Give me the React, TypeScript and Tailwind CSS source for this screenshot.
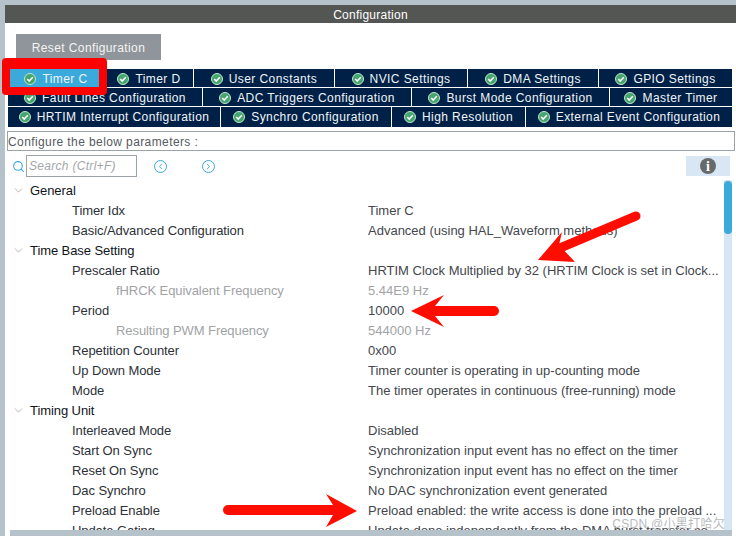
import {ChevronDown, ChevronLeft, ChevronRight, Search} from "lucide-react";

type Tab = {label: string; width: string; active?: boolean};

const tabRows: {height: string; pad: string; tabs: Tab[]}[] = [
    {
        height: "h-[18px]",
        pad: "pt-px",
        tabs: [
            {label: "Timer C", width: "w-[96px]", active: true},
            {label: "Timer D", width: "w-[88px]"},
            {label: "User Constants", width: "w-[140px]"},
            {label: "NVIC Settings", width: "w-[132px]"},
            {label: "DMA Settings", width: "w-[130px]"},
            {label: "GPIO Settings", width: "w-[133px]"},
        ],
    },
    {
        height: "h-[18px]",
        pad: "pt-px",
        tabs: [
            {label: "Fault Lines Configuration", width: "w-[194px]"},
            {label: "ADC Triggers Configuration", width: "w-[208px]"},
            {label: "Burst Mode Configuration", width: "w-[197px]"},
            {label: "Master Timer", width: "w-[122px]"},
        ],
    },
    {
        height: "h-[20px]",
        pad: "pt-0",
        tabs: [
            {label: "HRTIM Interrupt Configuration", width: "w-[212px]"},
            {label: "Synchro Configuration", width: "w-[170px]"},
            {label: "High Resolution", width: "w-[133px]"},
            {label: "External Event Configuration", width: "w-[206px]"},
        ],
    },
];

type Row = {label: string; value?: string; level: 0 | 1 | 2};

const rows: Row[] = [
    {label: "General", level: 0},
    {label: "Timer Idx", value: "Timer C", level: 1},
    {label: "Basic/Advanced Configuration", value: "Advanced (using HAL_Waveform methods)", level: 1},
    {label: "Time Base Setting", level: 0},
    {label: "Prescaler Ratio", value: "HRTIM Clock Multiplied by 32 (HRTIM Clock is set in Clock...", level: 1},
    {label: "fHRCK Equivalent Frequency", value: "5.44E9 Hz", level: 2},
    {label: "Period", value: "10000", level: 1},
    {label: "Resulting PWM Frequency", value: "544000 Hz", level: 2},
    {label: "Repetition Counter", value: "0x00", level: 1},
    {label: "Up Down Mode", value: "Timer counter is operating in up-counting mode", level: 1},
    {label: "Mode", value: "The timer operates in continuous (free-running) mode", level: 1},
    {label: "Timing Unit", level: 0},
    {label: "Interleaved Mode", value: "Disabled", level: 1},
    {label: "Start On Sync", value: "Synchronization input event has no effect on the timer", level: 1},
    {label: "Reset On Sync", value: "Synchronization input event has no effect on the timer", level: 1},
    {label: "Dac Synchro", value: "No DAC synchronization event generated", level: 1},
    {label: "Preload Enable", value: "Preload enabled: the write access is done into the preload ...", level: 1},
    {label: "Update Gating", value: "Update done independently from the DMA burst transfer co...", level: 1},
];

function CheckBadge() {
    return (
        <svg width="12" height="12" viewBox="0 0 12 12" className="shrink-0">
            <circle cx="6" cy="6" r="5.5" fill="#45a56e" stroke="#bfe6cd" strokeWidth="1"/>
            <path d="M3.2 6 L5.2 8 L8.8 4.2" fill="none" stroke="#ffffff" strokeWidth="1.6"/>
        </svg>
    );
}

// les trois flèches rouges dessinées par-dessus la capture
function Annotations() {
    return (
        <svg className="absolute left-0 top-0" viewBox="0 0 736 536" width="736" height="536">
            <g fill="#ff0d00" stroke="#ff0d00" strokeLinecap="round">
                <polygon strokeWidth="0" points="538,260 562,232 559,245 575,262"/>
                <line x1="560" y1="248" x2="636" y2="216" strokeWidth="9" fill="none"/>
                <polygon strokeWidth="0" points="411,311 444,295 435,306 435,316 444,327"/>
                <line x1="432" y1="311" x2="494" y2="311" strokeWidth="10" fill="none"/>
                <polygon strokeWidth="0" points="357,511 326,494 333,505 333,515 326,527"/>
                <line x1="228" y1="510" x2="335" y2="510" strokeWidth="10" fill="none"/>
            </g>
        </svg>
    );
}

export default function App() {
    return (
        <div className="relative w-[736px] h-[536px] overflow-hidden bg-[#b6c2c9] pt-[5px] pl-[5px] font-['Liberation_Sans',Arial,sans-serif]">
            <div className="flex h-[18px] items-center justify-center bg-[#545654] pt-px text-[12px] tracking-[0.25px] text-white">
                Configuration
            </div>

            <div className="h-[513px] bg-white flex flex-col">
                {/* bouton reset */}
                <div className="pl-[11px] pt-[11px] h-[46px]">
                    <div className="flex h-[26px] w-[145px] items-center justify-center bg-[#8f959b] pt-px text-[12px] tracking-[0.39px] text-[#f4f4f4]">
                        Reset Configuration
                    </div>
                </div>

                {/* onglets */}
                <div className="flex flex-col gap-px pl-[3px]">
                    {tabRows.map((row) => (
                        <div key={row.tabs[0].label} className={`flex gap-px ${row.height}`}>
                            {row.tabs.map((tab) => (
                                <div
                                    key={tab.label}
                                    className={`flex items-center justify-center gap-[6px] text-[12px] tracking-[0.42px] text-[#f0f4f8] ${row.pad} ${tab.width} ${tab.active ? "bg-[#3aa9dc]" : "bg-[#002147]"}`}
                                >
                                    <CheckBadge/>
                                    <span>{tab.label}</span>
                                </div>
                            ))}
                        </div>
                    ))}
                </div>

                <div className="ml-[2px] mt-[4px] flex h-[20px] w-[728px] items-center border border-[#9aa3a8] pt-px text-[12px] tracking-[0.4px] text-[#555a60]">
                    Configure the below parameters :
                </div>

                {/* barre de recherche */}
                <div className="flex h-[29px] items-center pl-[7px] pt-px">
                    <Search size={13} strokeWidth={2} className="text-[#3aa9dc]"/>
                    <div className="ml-px flex h-[22px] w-[111px] items-center border border-[#9aa3a8] pl-[2px] text-[12px] italic tracking-[0.3px] text-[#a3a6aa]">
                        Search (Ctrl+F)
                    </div>
                    <span className="ml-[17px] flex h-[13px] w-[13px] items-center justify-center rounded-full border border-[#3aa9dc] text-[#3aa9dc]">
                        <ChevronLeft size={9} strokeWidth={2.5}/>
                    </span>
                    <span className="ml-[35px] flex h-[13px] w-[13px] items-center justify-center rounded-full border border-[#3aa9dc] text-[#3aa9dc]">
                        <ChevronRight size={9} strokeWidth={2.5}/>
                    </span>
                    <div className="ml-[471px] flex h-[20px] w-[44px] items-center justify-center bg-[#d9e7f4]">
                        <span className="flex h-[16px] w-[16px] items-center justify-center rounded-full bg-[#666a6c] font-['Liberation_Serif',serif] text-[14px] font-bold text-white">
                            i
                        </span>
                    </div>
                </div>

                {/* arbre des paramètres */}
                <div className="flex h-[350px] overflow-hidden pl-[5px]">
                    <div className="w-[714px] overflow-hidden">
                        {rows.map((row) => (
                            <div key={row.label} className="flex h-[20px] items-center pt-px text-[13px] whitespace-nowrap">
                                <div className="w-[358px] shrink-0 tracking-[-0.08px]">
                                    {row.level === 0 && (
                                        <div className="flex items-center gap-[5px] text-[#10141a]">
                                            <ChevronDown size={13} strokeWidth={1} className="ml-[2px] text-[#777]"/>
                                            <span>{row.label}</span>
                                        </div>
                                    )}
                                    {row.level === 1 && <span className="pl-[62px] text-[#2d3138]">{row.label}</span>}
                                    {row.level === 2 && <span className="pl-[106px] text-[#a1a3a6]">{row.label}</span>}
                                </div>
                                <span className={row.level === 2 ? "text-[#a1a3a6]" : "text-[#44474d]"}>{row.value}</span>
                            </div>
                        ))}
                    </div>
                    <div className="h-full w-[8px] bg-[#d6e6f4]">
                        <div className="mt-px h-[53px] w-[8px] rounded bg-[#3aa9dc]"/>
                    </div>
                </div>

                <div className="ml-[5px] h-[6px] w-[722px] bg-[#b6c2c9]"/>
            </div>

            {/* annotations rouges */}
            <div className="absolute left-[2px] top-[58px] h-[37px] w-[105px] rounded-[4px] border-[8px] border-t-[11px] border-[#ff0000]"/>
            <Annotations/>
            <div className="absolute bottom-[3px] right-[11px] text-[12px] tracking-[0.3px] text-[#b8bcc0] font-['Liberation_Sans','Noto_Sans_CJK_SC',sans-serif]">
                CSDN @小黑打哈欠
            </div>
        </div>
    );
}
